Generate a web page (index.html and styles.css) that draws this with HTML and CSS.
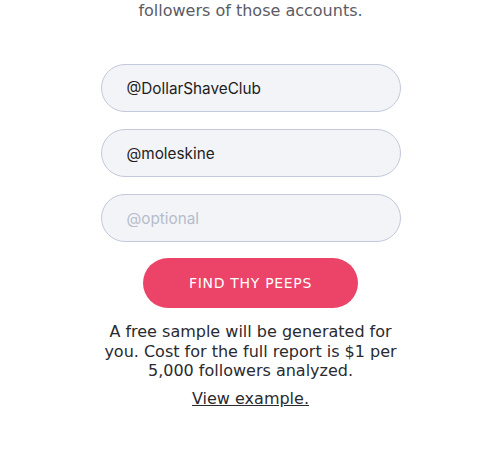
FILE: index.html
```html
<!DOCTYPE html>
<html>
<head>
<meta charset="utf-8">
<link rel="stylesheet" href="styles.css">
</head>
<body>
<main class="page">
  <p class="intro">followers of those accounts.</p>
  <form class="form">
    <input class="field" type="text" value="@DollarShaveClub">
    <input class="field" type="text" value="@moleskine">
    <input class="field" type="text" placeholder="@optional">
    <button class="cta" type="button">FIND THY PEEPS</button>
  </form>
  <p class="note">A free sample will be generated for you. Cost for the full report is $1 per 5,000 followers analyzed.</p>
  <a class="example" href="#">View example.</a>
</main>
</body>
</html>
```
FILE: styles.css
```css
html, body {
  margin: 0;
  padding: 0;
  background: #ffffff;
}
.page {
  width: 483px;
  padding-left: 9px;
  display: flex;
  flex-direction: column;
  align-items: center;
  font-family: "DejaVu Sans", sans-serif;
  color: #333333;
}
.intro {
  margin: 0;
  padding-top: 1px;
  font-size: 16px;
  line-height: 20px;
  color: #5b5b66;
}
.form {
  margin-top: 43px;
  display: flex;
  flex-direction: column;
  align-items: center;
  gap: 17px;
}
.field {
  box-sizing: border-box;
  width: 300px;
  height: 48px;
  border: 1px solid #c3c9db;
  border-radius: 24px;
  background: #f3f4f8;
  padding: 0 25px;
  font-family: Inter, sans-serif;
  font-size: 15.3px;
  color: #1d1d22;
  outline: none;
}
.field::placeholder {
  color: #b6bccb;
}
.cta {
  margin-top: -1px;
  width: 215px;
  height: 50px;
  border: none;
  border-radius: 25px;
  background: #ec4468;
  color: #ffffff;
  font-family: "DejaVu Sans", sans-serif;
  font-size: 14px;
  letter-spacing: 0.7px;
  cursor: pointer;
}
.note {
  margin: 14px 0 0;
  width: 300px;
  text-align: center;
  font-size: 16px;
  line-height: 19.5px;
  color: #2a2a30;
}
.example {
  margin-top: 8px;
  font-size: 16px;
  line-height: 20px;
  color: #2a2a30;
  text-decoration: underline;
}
```
